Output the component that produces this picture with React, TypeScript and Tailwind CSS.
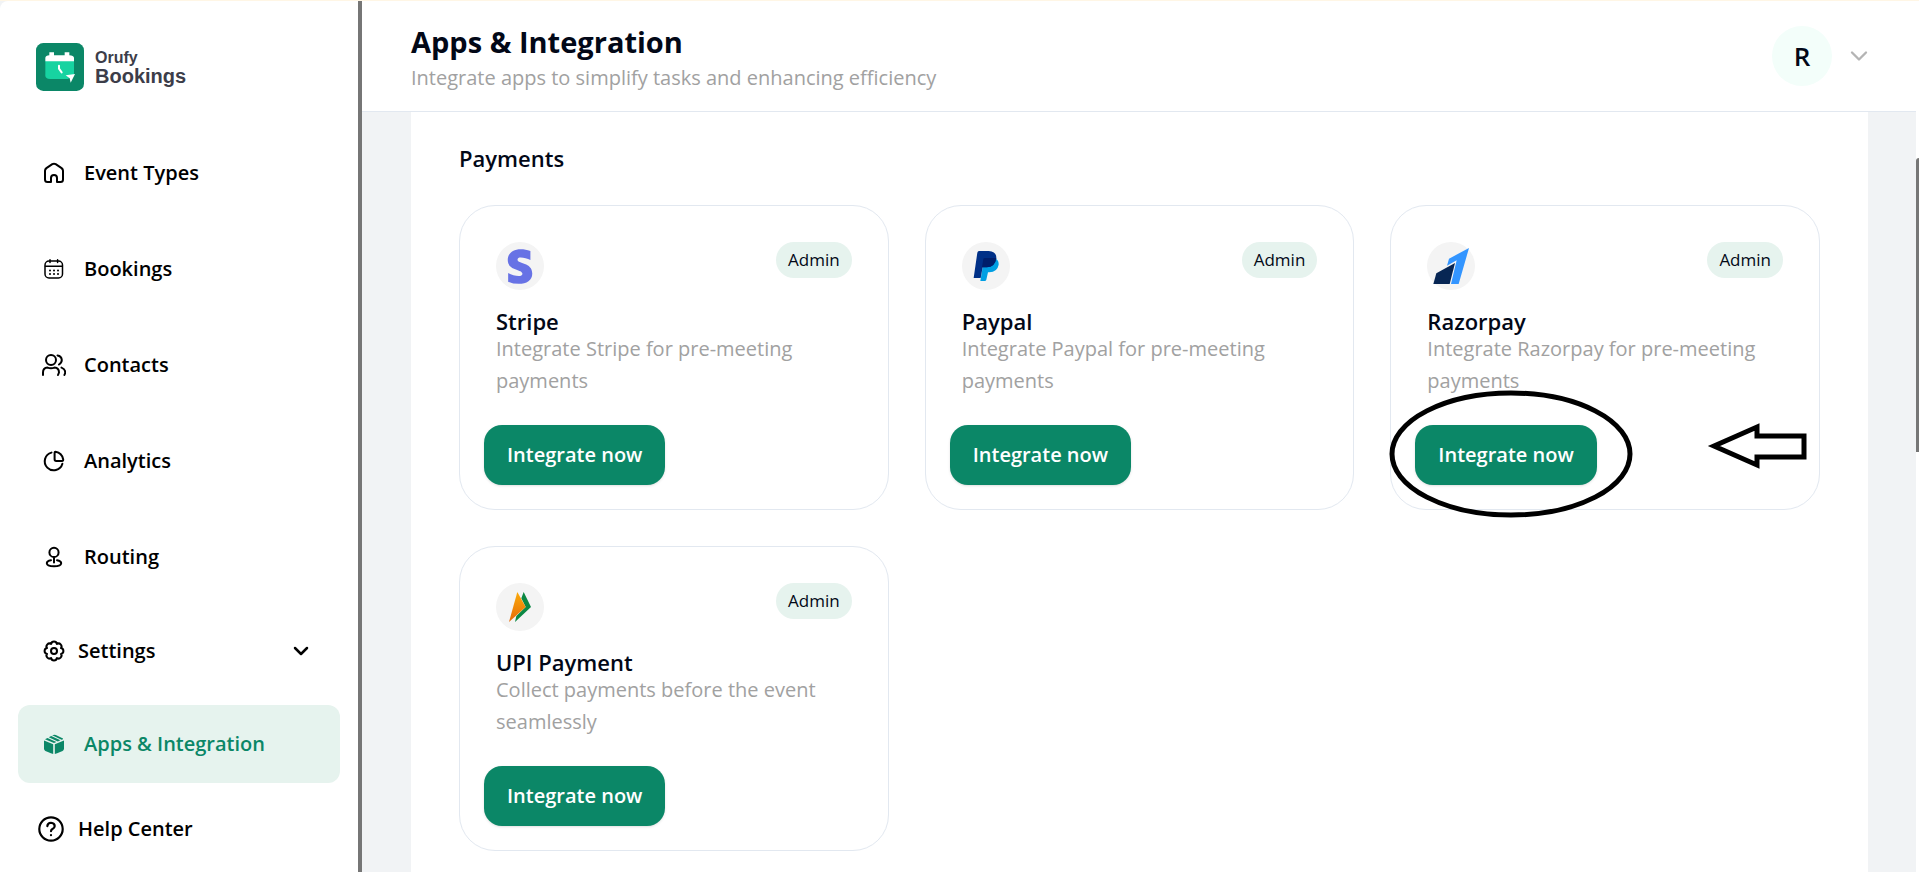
import type { ReactNode } from "react";
import { ChevronDown } from "lucide-react";
import { FaStripeS } from "react-icons/fa";

type NavItem = { label: string; icon: ReactNode };

type Integration = { name: string; description: string; logo: ReactNode; highlighted?: boolean };

const strokeProps = {
  viewBox: "0 0 24 24",
  fill: "none",
  stroke: "currentColor",
  strokeWidth: 2,
  strokeLinecap: "round" as const,
  strokeLinejoin: "round" as const,
  className: "h-6 w-6 shrink-0",
  "aria-hidden": true,
};

function HomeIcon() {
  return (
    <svg {...strokeProps}>
      <path d="M9 21H5.5Q3 21 3 18.5V9.8Q3 8.2 4.4 7.1L10.3 3.2Q12 2.2 13.7 3.2L19.6 7.1Q21 8.2 21 9.8V18.5Q21 21 18.5 21H15V17Q15 14 12 14T9 17Z" />
    </svg>
  );
}

function CalendarIcon() {
  return (
    <svg {...strokeProps} strokeWidth={1.5}>
      <rect x="3" y="4" width="17.5" height="17" rx="4" />
      <path d="M3.5 9.2H20M8 2.8V5.4M15.6 2.8V5.4" />
      <path d="M8 13.4H8.01M12 13.4H12.01M16 13.4H16.01M8 17H8.01M12 17H12.01M16 17H16.01" strokeWidth={2} />
    </svg>
  );
}

function ContactsIcon() {
  return (
    <svg {...strokeProps}>
      <circle cx="9" cy="7" r="5" />
      <path d="M1 22V19.5Q1 15 5.5 14.6Q9 16 12.5 14.6Q17 15 17 19.5L16 22" />
      <path d="M15.5 2.4Q19.5 3 19.8 7Q19.7 10 17 11.5M19.5 14.6Q23.4 16 23.2 20L22.4 22" />
    </svg>
  );
}

function AnalyticsIcon() {
  return (
    <svg {...strokeProps}>
      <path d="M9.5 3.6A9 9 0 1 0 20.4 14.8" />
      <path d="M12.6 3.6Q12.6 2.8 13.5 2.8Q20 3.8 21.2 10.5Q21.4 11.9 20 11.9H14.2Q12.6 11.9 12.6 10.3Z" />
    </svg>
  );
}

function RoutingIcon() {
  return (
    <svg {...strokeProps}>
      <circle cx="12" cy="7.4" r="4.6" />
      <path d="M12 12V17.6M9 15.2Q4.8 16 4.8 18.2Q5 21.2 12 21.2T19.2 18.2Q19.2 16 15 15.2" />
    </svg>
  );
}

function SettingsIcon() {
  return (
    <svg {...strokeProps}>
      <circle cx="12" cy="12" r="3" />
      <path d="M9.1 5A2.95 2.95 0 0 1 14.9 5A2.95 2.95 0 0 1 19 9.1A2.95 2.95 0 0 1 19 14.9A2.95 2.95 0 0 1 14.9 19A2.95 2.95 0 0 1 9.1 19A2.95 2.95 0 0 1 5 14.9A2.95 2.95 0 0 1 5 9.1A2.95 2.95 0 0 1 9.1 5Z" />
    </svg>
  );
}

function AppsIcon() {
  return (
    <svg viewBox="0 0 24 24" fill="currentColor" className="h-6 w-6 shrink-0" aria-hidden>
      <path d="M2 8.6L11.2 12.3V22Q10.4 21.9 3.4 18.9Q2 18.2 2 16.6Z" />
      <path d="M22 8.6L12.8 12.3V22Q13.6 21.9 20.6 18.9Q22 18.2 22 16.6Z" />
      <path d="M3 7.2L5.5 5.9L14.4 10L12 11Z" />
      <path d="M6.8 5.2L9.2 3.9L18.4 8.3L15.8 9.4Z" />
      <path d="M10.2 3.3Q12 2.3 13.8 3L21 6.6V7.2L19.6 7.8Z" />
    </svg>
  );
}

function HelpIcon() {
  return (
    <svg {...strokeProps} className="h-[26px] w-[26px] shrink-0">
      <circle cx="12" cy="12" r="10.8" />
      <path d="M8.6 9.3Q8.8 6.3 12 6.2Q15.4 6.4 15.4 9.3Q15.3 11 13.4 12Q12 12.8 12 14M12 17.6V17.7" />
    </svg>
  );
}

function BrandMark() {
  return (
    <svg viewBox="0 0 144 144" className="h-12 w-12 shrink-0" aria-hidden>
      <rect width="144" height="144" rx="22" fill="#0b8767" />
      <path d="M28 54H114V94L96 108H42Q28 106 28 98Z" fill="#17d3a1" />
      <path d="M28 55V44Q29 38 40 37V28H54V37H86V28H100V37Q113 38 114 44V55Z" fill="#fff" />
      <path d="M69 68V77L77 88" fill="none" stroke="#fff" strokeWidth="6" strokeLinecap="round" />
      <path d="M89 97L117 93L104 119L101 106Z" fill="#fff" />
    </svg>
  );
}

function PaypalLogo() {
  return (
    <svg viewBox="0 0 144 144" className="h-12 w-12" aria-hidden>
      <path d="M102 50Q111 56 110 68Q106 90 82 91H78L73 113Q72 117 68 117H55L62 76Z" fill="#009fe3" />
      <path d="M51 27H80Q104 28 103 49Q99 76 74 76H62L56 108H35L46 32Q47 27 51 27Z" fill="#003087" />
      <path d="M64 50Q65 48 69 48H103Q99 76 74 76H60Z" fill="#001f6b" />
    </svg>
  );
}

function RazorpayLogo() {
  return (
    <svg viewBox="0 0 144 144" className="h-12 w-12" aria-hidden>
      <path d="M19 126L28 94L84 63L68 126Z" fill="#072654" />
      <path d="M126 18L95 126H72L89 55L60 71L66 50Z" fill="#3395ff" />
    </svg>
  );
}

function UpiLogo() {
  return (
    <svg viewBox="0 0 144 144" className="h-12 w-12" aria-hidden>
      <defs>
        <linearGradient id="upi-orange" x1="0" y1="0" x2="0" y2="1">
          <stop offset="0" stopColor="#fbab0a" />
          <stop offset="1" stopColor="#e66a08" />
        </linearGradient>
      </defs>
      <path d="M83 27L105 72L57 117L61 99L89 72L76 46Z" fill="#0c8844" />
      <path d="M64 27L89 72L39 117Z" fill="url(#upi-orange)" />
    </svg>
  );
}

const navItems: NavItem[] = [
  { label: "Event Types", icon: <HomeIcon /> },
  { label: "Bookings", icon: <CalendarIcon /> },
  { label: "Contacts", icon: <ContactsIcon /> },
  { label: "Analytics", icon: <AnalyticsIcon /> },
  { label: "Routing", icon: <RoutingIcon /> },
];

const integrations: Integration[] = [
  {
    name: "Stripe",
    description: "Integrate Stripe for pre-meeting payments",
    logo: <FaStripeS className="h-[35px] w-[26px] text-[#6772e5]" />,
  },
  { name: "Paypal", description: "Integrate Paypal for pre-meeting payments", logo: <PaypalLogo /> },
  {
    name: "Razorpay",
    description: "Integrate Razorpay for pre-meeting payments",
    logo: <RazorpayLogo />,
    highlighted: true,
  },
  { name: "UPI Payment", description: "Collect payments before the event seamlessly", logo: <UpiLogo /> },
];

function Sidebar() {
  return (
    <aside className="flex w-[362px] shrink-0 flex-col rounded-tl-lg border-r-4 border-[#767676] bg-white text-[20px] font-semibold text-black">
      <a href="#" className="mt-[42px] ml-9 flex items-center gap-[11px] font-['Liberation_Sans',sans-serif] text-[#3c3d49]">
        <BrandMark />
        <span className="flex flex-col pt-px font-bold">
          <span className="text-base leading-4">Orufy</span>
          <span className="text-xl leading-5">Bookings</span>
        </span>
      </a>

      <nav className="mt-[43px] flex flex-col px-[18px]">
        <div className="flex flex-col gap-[18px]">
          {navItems.map((item) => (
            <a key={item.label} href="#" className="flex h-[78px] items-center gap-[18px] rounded-xl px-6">
              {item.icon}
              <span>{item.label}</span>
            </a>
          ))}
          <button type="button" className="flex h-[73px] items-center gap-3 rounded-xl pr-[27px] pl-6">
            <SettingsIcon />
            <span>Settings</span>
            <ChevronDown className="ml-auto h-6 w-6" strokeWidth={2.5} />
          </button>
          <a
            href="#"
            aria-current="page"
            className="flex h-[78px] items-center gap-[18px] rounded-xl bg-[#e6f3ee] px-6 text-[#0b8767]"
          >
            <AppsIcon />
            <span>Apps &amp; Integration</span>
          </a>
        </div>
        <a href="#" className="mt-4 flex h-[60px] items-center gap-[14px] px-5">
          <HelpIcon />
          <span>Help Center</span>
        </a>
      </nav>
    </aside>
  );
}

function Header() {
  return (
    <header className="flex h-[111px] shrink-0 items-center justify-between border-b border-slate-200 bg-white pr-[43px] pl-[49px]">
      <div className="pt-2">
        <h1 className="text-[29px] leading-9 font-bold text-[#020817]">Apps &amp; Integration</h1>
        <p className="text-[20px] leading-9 text-[#a1a1a1]">
          Integrate apps to simplify tasks and enhancing efficiency
        </p>
      </div>
      <button type="button" aria-label="Account menu" className="flex items-center gap-[13px]">
        <span className="flex h-[60px] w-[60px] items-center justify-center rounded-full bg-[#f3fefa] text-[26px] font-semibold text-[#020817]">
          R
        </span>
        <ChevronDown className="h-7 w-7 text-[#b4b4b4]" />
      </button>
    </header>
  );
}

function IntegrationCard({ name, description, logo, highlighted }: Integration) {
  return (
    <article className="relative flex flex-col items-start rounded-[36px] border border-slate-200 p-6">
      <div className="w-full px-3 pt-3">
        <div className="flex items-start justify-between">
          <span className="flex h-12 w-12 items-center justify-center rounded-full bg-[#f4f4f4]">{logo}</span>
          <span className="flex h-9 items-center rounded-full bg-[#e6f3ee] px-3 text-[17px] text-[#020817]">
            Admin
          </span>
        </div>
        <h3 className="mt-[19px] text-[22px] leading-6 font-semibold text-[#020817]">{name}</h3>
        <p className="text-[20px] leading-8 text-[#a1a1a1]">{description}</p>
      </div>
      <button
        type="button"
        className="mt-7 h-[60px] rounded-[18px] bg-[#0b8767] px-[23px] text-[20px] font-semibold text-white shadow-sm"
      >
        Integrate now
      </button>

      {/* Hand-drawn callouts over the card */}
      {highlighted && (
        <>
          <svg viewBox="0 0 244 128" className="pointer-events-none absolute top-[184px] -left-0.5 h-32 w-[244px]" aria-hidden>
            <ellipse cx="122" cy="64" rx="119" ry="61" fill="none" stroke="#000" strokeWidth="5" />
          </svg>
          <svg viewBox="0 0 100 48" className="pointer-events-none absolute top-[215px] right-3 h-12 w-[100px]" aria-hidden>
            <path d="M7 25L50 6V15H97V36H50V44Z" fill="none" stroke="#000" strokeWidth="5" />
          </svg>
        </>
      )}
    </article>
  );
}

export default function App() {
  return (
    <div className="relative flex h-screen overflow-hidden border-t border-[#fff6e5] bg-[#f1f3f5] font-['Open_Sans','Noto_Sans',sans-serif]">
      <Sidebar />
      <div className="flex min-w-0 flex-1 flex-col border-r-[3px] border-white">
        <Header />
        <main className="min-h-0 flex-1 overflow-hidden pr-12 pl-[49px]">
          <section className="min-h-full bg-white px-12 pt-[30px]">
            <h2 className="text-[22px] leading-8 font-semibold text-[#020817]">Payments</h2>
            <div className="mt-[31px] grid grid-cols-3 gap-9">
              {integrations.map((item) => (
                <IntegrationCard key={item.name} {...item} />
              ))}
            </div>
          </section>
        </main>
      </div>
      {/* Scroll thumb */}
      <div className="absolute top-[157px] right-0 h-[294px] w-[3px] rounded-tl-sm bg-[#767676]" />
    </div>
  );
}
